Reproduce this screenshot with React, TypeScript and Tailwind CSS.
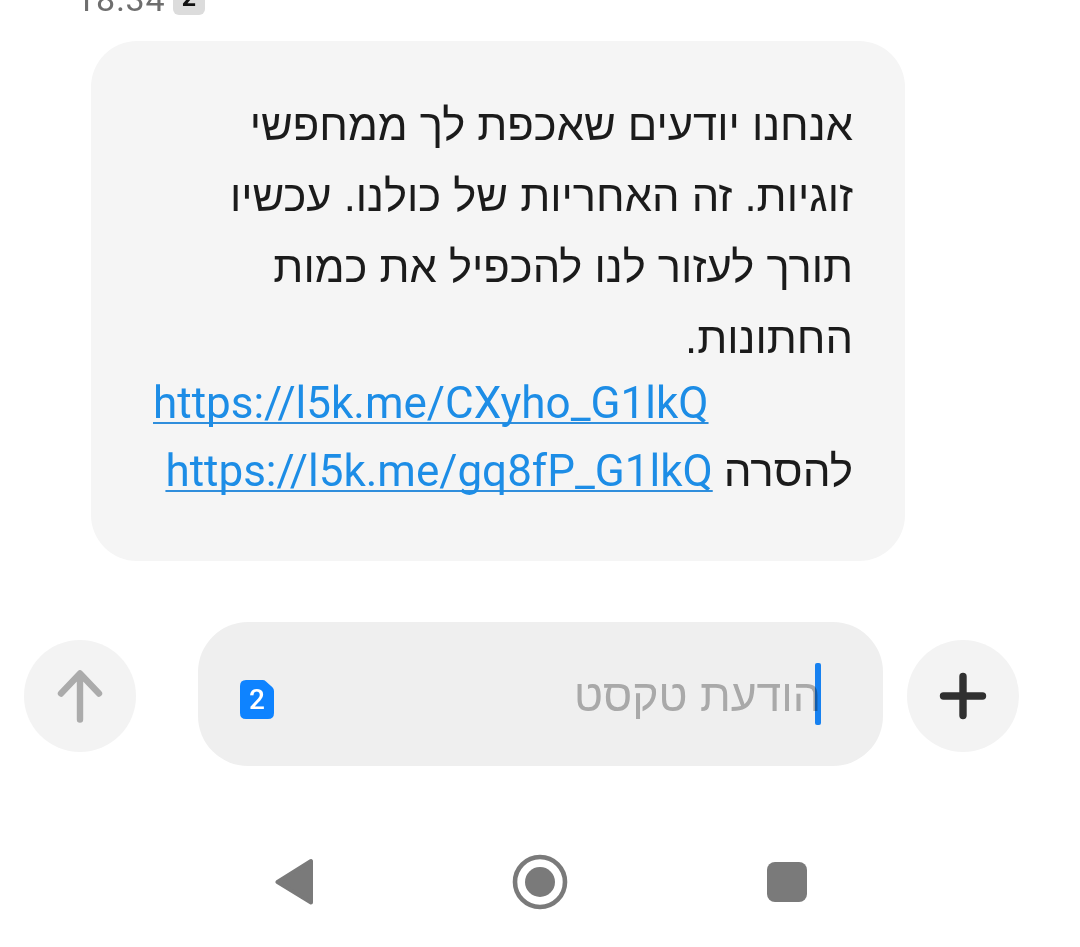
const lines = [
  "אנחנו יודעים שאכפת לך ממחפשי",
  "זוגיות. זה האחריות של כולנו. עכשיו",
  "תורך לעזור לנו להכפיל את כמות",
  "החתונות.",
];

function MessageLink({ children }: { children: string }) {
  return (
    <a
      dir="ltr"
      className="text-[#1d8de6] underline decoration-[#2f8edc] decoration-2 underline-offset-[4px] [text-decoration-skip-ink:none]"
    >
      {children}
    </a>
  );
}

export default function App() {
  return (
    <main className="flex h-[947px] w-[1080px] flex-col overflow-hidden bg-white font-['Roboto','Liberation_Sans',sans-serif] text-[#1b1b1b]">
      <header className="flex h-[41px] shrink-0 items-start pl-[76px]">
        <span className="-mt-[21px] w-[97px] text-[34px] leading-[40px] tracking-[1px] text-[#6e6e6e]">18:34</span>
        <span className="-mt-[20px] flex h-[35px] w-[32px] items-center justify-center rounded-[6px] bg-[#dcdcdc] text-[25px] font-bold text-[#111]">2</span>
      </header>

      <section className="ml-[91px] flex h-[520px] w-[814px] shrink-0 flex-col rounded-[46px] bg-[#f5f5f5] pt-[49px] pr-[52px] pl-[62px]">
        <div dir="rtl" className="font-['Liberation_Sans',sans-serif] text-[43.5px] leading-[71px] whitespace-nowrap">
          {lines.map((line) => (
            <p key={line}>{line}</p>
          ))}
        </div>
        <div className="-mt-[5px] text-[44px] leading-[68px] whitespace-nowrap">
          <p>
            <MessageLink>https://l5k.me/CXyho_G1lkQ</MessageLink>
          </p>
          <p className="flex justify-end gap-[11px]">
            <MessageLink>https://l5k.me/gq8fP_G1lkQ</MessageLink>
            <span dir="rtl" className="font-['Liberation_Sans',sans-serif] text-[44px]">להסרה</span>
          </p>
        </div>
      </section>

      <form className="mt-[61px] flex h-[144px] shrink-0 items-center pl-6">
        <button type="button" aria-label="Send" className="mt-1 flex size-[112px] items-center justify-center rounded-full bg-[#f3f3f3]">
          <svg width="112" height="112" viewBox="0 0 112 112" fill="none" stroke="#ababab" strokeWidth="6.4" strokeLinecap="round" strokeLinejoin="round">
            <path d="M56 79.500V34M37 53.500 56 33.500 75 53.500" />
          </svg>
        </button>
        <div className="ml-[62px] flex h-[144px] w-[685px] items-center justify-between rounded-[50px] bg-[#efefef] pr-[62px] pl-[42px]">
          <span className="relative mt-[10px] flex h-[39px] w-[34px] items-center justify-center text-[28px] leading-none font-medium text-white">
            <svg className="absolute inset-0" width="34" height="39" viewBox="0 0 34 39" fill="#0e83ff">
              <path d="M6 0H22.500Q24.500 0 26 1.400L32.400 7.300Q34 8.800 34 11V33Q34 39 28 39H6Q0 39 0 33V6Q0 0 6 0Z" />
            </svg>
            <span className="relative mt-[2px]">2</span>
          </span>
          <span className="relative flex items-center">
            <span className="absolute right-0 h-[62px] w-[6px] rounded-[2px] bg-[#1781f0]" />
            <span dir="rtl" className="relative mt-[5px] font-['Liberation_Sans',sans-serif] text-[44.5px] whitespace-nowrap text-[#b4b4b4] mix-blend-multiply">הודעת טקסט</span>
          </span>
        </div>
        <button type="button" aria-label="Add" className="mt-1 ml-6 flex size-[112px] items-center justify-center rounded-full bg-[#f3f3f3]">
          <svg width="112" height="112" viewBox="0 0 112 112" fill="none" stroke="#303030" strokeWidth="7.400" strokeLinecap="round">
            <path d="M56 36.500V75.500M36.500 56H75.500" />
          </svg>
        </button>
      </form>

      <nav className="mt-[88px] flex h-[56px] shrink-0 items-center justify-between pr-[273.5px] pl-[275px]">
        <svg width="39" height="48" viewBox="0 0 39 48" fill="#7a7a7a" stroke="#7a7a7a" strokeWidth="4" strokeLinejoin="round">
          <path d="M2.500 24 36 3V44.500Z" />
        </svg>
        <svg className="mr-px" width="56" height="56" viewBox="0 0 56 56" fill="none">
          <circle cx="28" cy="28" r="25" stroke="#7a7a7a" strokeWidth="4.600" />
          <circle cx="28" cy="28" r="15" fill="#7a7a7a" />
        </svg>
        <span className="size-10 rounded-[8px] bg-[#7a7a7a]" />
      </nav>
    </main>
  );
}
